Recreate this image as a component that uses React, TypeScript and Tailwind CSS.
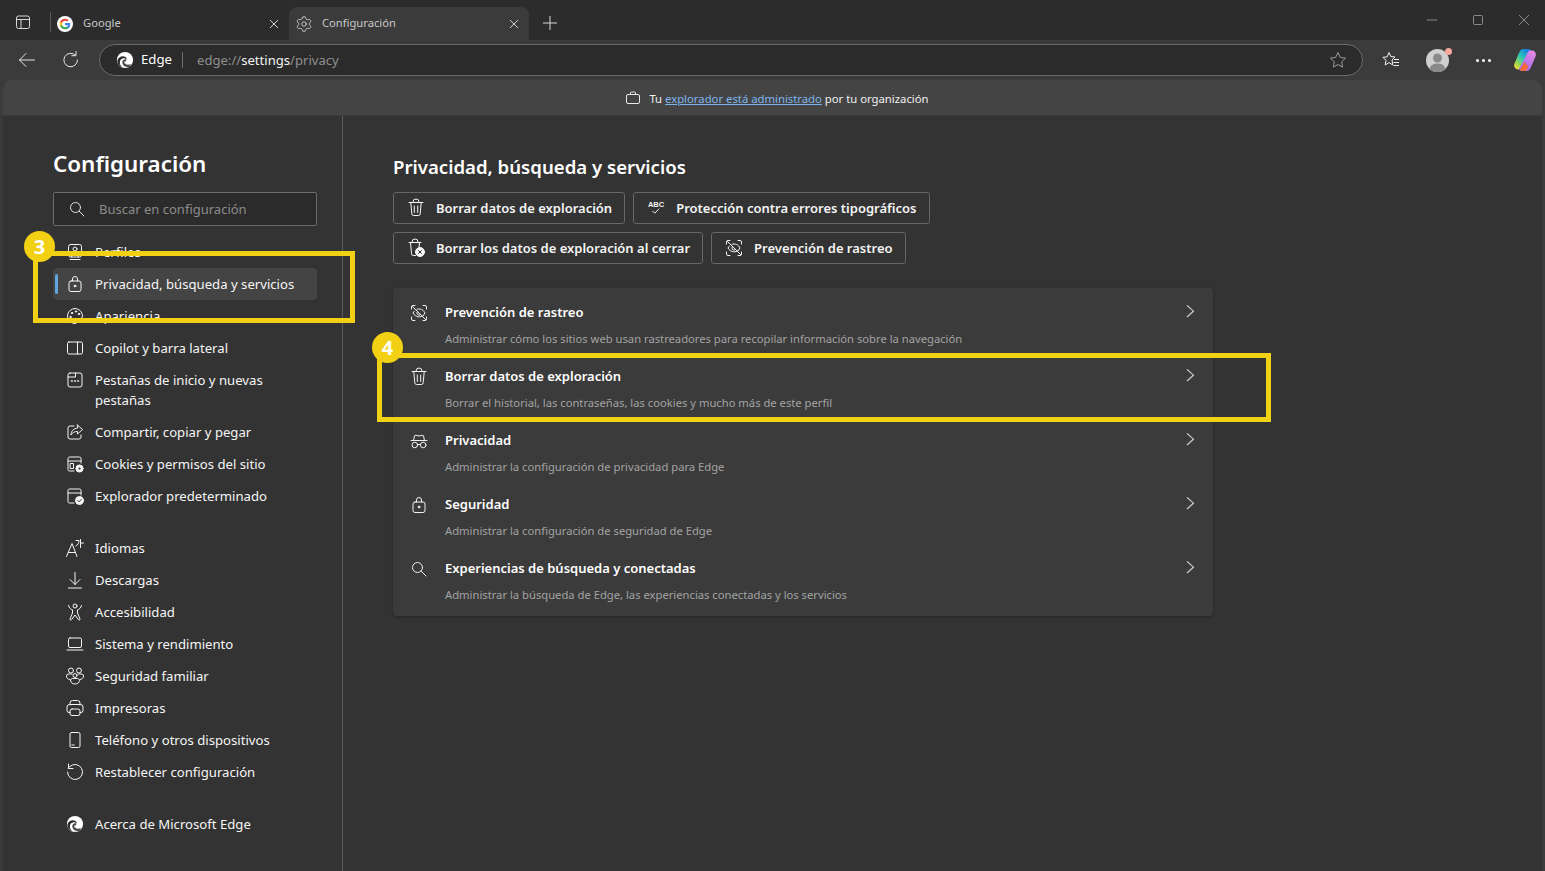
import type { ReactNode } from "react";
import { Settings } from "lucide-react";

function Ico({ size = 20, className = "", children }: { size?: number; className?: string; children: ReactNode }) {
  return (
    <svg
      width={size}
      height={size}
      viewBox="0 0 20 20"
      fill="none"
      stroke="currentColor"
      strokeWidth={1}
      strokeLinecap="round"
      strokeLinejoin="round"
      className={`shrink-0 ${className}`}
    >
      {children}
    </svg>
  );
}

const TrashIcon = () => (
  <Ico>
    <path d="M3 4.500h14M7 4.500V4a3 3 0 0 1 6 0v.5M4.800 4.500l1 11.200A1.800 1.800 0 0 0 7.600 17.500h4.800a1.800 1.800 0 0 0 1.800-1.800l1-11.200M8.300 8v6.500M11.700 8v6.500" />
  </Ico>
);
const TrashCloseIcon = () => (
  <Ico>
    <path d="M3 4.500h12M6 4.500V4a3 3 0 0 1 6 0v.5M4.500 4.500l1 11.200A1.800 1.800 0 0 0 7.300 17.500H9.500M13.500 4.500l-.4 4.500" />
    <circle cx="14" cy="14" r="4.500" fill="currentColor" />
    <path d="M12.500 12.500l3 3M15.500 12.500l-3 3" stroke="#333333" />
  </Ico>
);
const TrackIcon = () => (
  <Ico>
    <path d="M2.500 6V4A1.500 1.500 0 0 1 4 2.500h2M14 2.500h2A1.500 1.500 0 0 1 17.500 4v2M2.500 14v2A1.500 1.500 0 0 0 4 17.500h2M14 17.500h2a1.500 1.500 0 0 0 1.500-1.500v-2" />
    <path d="M5.500 8c-.6.600-1.100 1.300-1.500 2 2.500 4.500 8 5 11 2M8 6.200c3-.8 6.300.2 8 3.800-.3.600-.7 1.100-1 1.500M3.500 3.500l13 13" />
    <path d="M8.500 8.500a2.100 2.100 0 0 0 3 3" />
  </Ico>
);
const AbcIcon = () => (
  <svg width="20" height="20" viewBox="0 0 20 20" className="shrink-0">
    <text x="10" y="8.500" textAnchor="middle" fontSize="7.500" fontFamily="'Liberation Sans',sans-serif" fill="currentColor">
      ABC
    </text>
    <path d="M6.500 13l2.200 2.200 4.500-4.500" fill="none" stroke="currentColor" strokeWidth={1} />
  </svg>
);
const LockIcon = () => (
  <Ico>
    <rect x="4" y="7" width="12" height="10.500" rx="2" />
    <path d="M7.500 7V5a2.500 2.500 0 0 1 5 0v2" />
    <circle cx="10" cy="12" r=".9" fill="currentColor" />
  </Ico>
);
const SpyIcon = () => (
  <Ico>
    <path d="M2 9.500h16M4.500 9.500l1-4.500a1 1 0 0 1 1.300-.7L10 5l3.200-.7a1 1 0 0 1 1.300.7l1 4.500" />
    <circle cx="5.800" cy="14" r="2.800" />
    <circle cx="14.200" cy="14" r="2.800" />
    <path d="M8.600 13.500h2.800" />
  </Ico>
);
const SearchIcon = () => (
  <Ico>
    <circle cx="8.500" cy="8.500" r="5" />
    <path d="M12.200 12.200l4.800 4.800" />
  </Ico>
);
const ProfileIcon = () => (
  <Ico>
    <rect x="3.500" y="2.500" width="13" height="12.500" rx="2" />
    <circle cx="10" cy="7" r="2" />
    <path d="M6.500 15c0-5 7-5 7 0M5 17.500h10" />
  </Ico>
);
const PaletteIcon = () => (
  <Ico>
    <path d="M10 2.500a7.500 7.500 0 0 0 0 15c2 0 2-1.500 1.300-2.500-.8-1.300.2-2.500 1.700-2.500h2c1.500 0 2.500-1 2.500-2.500 0-4-3.500-7.500-7.500-7.500z" />
    <circle cx="7" cy="7" r=".7" fill="currentColor" />
    <circle cx="11" cy="5.500" r=".7" fill="currentColor" />
    <circle cx="14" cy="8" r=".7" fill="currentColor" />
    <circle cx="5.500" cy="11" r=".7" fill="currentColor" />
  </Ico>
);
const SidebarIcon = () => (
  <Ico>
    <rect x="2.500" y="4" width="15" height="12" rx="1.500" />
    <path d="M12.500 4v12" />
  </Ico>
);
const NewTabIcon = () => (
  <Ico>
    <rect x="3" y="3" width="14" height="14" rx="2" />
    <path d="M3 7h7.500V3" />
    <path d="M6.500 11h.8M9.600 11h.8M12.700 11h.8" strokeWidth={1.400} />
  </Ico>
);
const ShareIcon = () => (
  <Ico>
    <path d="M9 4H5a2 2 0 0 0-2 2v9a2 2 0 0 0 2 2h9a2 2 0 0 0 2-2v-2" />
    <path d="M12.500 3l5 4.500-5 4.500V9.500c-3 0-5 1-6.500 3.500 0-4 2.500-6.500 6.500-7z" />
  </Ico>
);
const CookieIcon = () => (
  <Ico>
    <path d="M9 17H4.500A1.500 1.500 0 0 1 3 15.500v-11A1.500 1.500 0 0 1 4.500 3h10A1.500 1.500 0 0 1 16 4.500V9M3 7h13" />
    <rect x="5.500" y="9.500" width="3" height="5" />
    <circle cx="14.500" cy="14.500" r="3.600" fill="currentColor" />
    <circle cx="14.500" cy="14.500" r="1.100" fill="#333333" stroke="none" />
  </Ico>
);
const DefaultBrowserIcon = () => (
  <Ico>
    <path d="M9 17H4.500A1.500 1.500 0 0 1 3 15.500v-11A1.500 1.500 0 0 1 4.500 3h10A1.500 1.500 0 0 1 16 4.500V9M3 7h13" />
    <circle cx="14.500" cy="14.500" r="4" fill="currentColor" />
    <path d="M12.800 14.600l1.200 1.200 2.200-2.300" stroke="#333333" />
  </Ico>
);
const LangIcon = () => (
  <Ico>
    <path d="M1.500 18.500L7 5.500l5 13M3.500 14.500h7M11 2.500h3c0 2.500-1 4.500-3 5.500M15.500 1.500v8M15.500 5h3" />
  </Ico>
);
const DownloadIcon = () => (
  <Ico>
    <path d="M10 2.500v12M5 9.500l5 5 5-5M3.500 18h13" />
  </Ico>
);
const AccessIcon = () => (
  <Ico>
    <circle cx="10" cy="4" r="2" />
    <path d="M3.500 3.500c.5 2.500 2.500 4 4 4.300V11l-2.500 6c-.3 1 1 1.500 1.500.7L10 13l3.500 4.700c.5.800 1.800.3 1.500-.7l-2.500-6V7.800c1.500-.3 3.500-1.800 4-4.300" />
  </Ico>
);
const LaptopIcon = () => (
  <Ico>
    <rect x="3.500" y="4" width="13" height="9.500" rx="1.500" />
    <path d="M2 16h16" />
  </Ico>
);
const FamilyIcon = () => (
  <Ico>
    <circle cx="6" cy="4.500" r="2.500" />
    <circle cx="14" cy="4.500" r="2.500" />
    <circle cx="10" cy="9.500" r="2" />
    <path d="M7 8H3.500A2 2 0 0 0 1.500 10C1.500 12 3 13.500 5 13.500M13 8h3.500a2 2 0 0 1 2 2c0 2-1.500 3.500-3.500 3.500M5.500 14.500c0-1 1-2 2-2h5c1 0 2 1 2 2 0 2-2 3.500-4.500 3.500s-4.500-1.500-4.500-3.500z" />
  </Ico>
);
const PrinterIcon = () => (
  <Ico>
    <path d="M5 7V5a2.500 2.500 0 0 1 2.500-2.500h5A2.500 2.500 0 0 1 15 5v2M5 14.500H4A2 2 0 0 1 2 12.500V9a2.500 2.500 0 0 1 2.500-2.500h11A2.500 2.500 0 0 1 18 9v3.500a2 2 0 0 1-2 2h-1" />
    <rect x="5" y="11" width="10" height="6.500" rx="2" />
  </Ico>
);
const PhoneIcon = () => (
  <Ico>
    <rect x="5" y="2.500" width="10" height="15" rx="1.500" />
    <path d="M6.800 15h2.400" />
  </Ico>
);
const ResetIcon = () => (
  <Ico>
    <path d="M2.500 10a7.500 7.500 0 1 0 2.300-5.400L3 6.300M3.500 2v4.500H8" />
  </Ico>
);

function EdgeLogo({ size = 18 }: { size?: number }) {
  return (
    <svg width={size} height={size} viewBox="0 0 20 20" className="shrink-0">
      <circle cx="10" cy="10" r="9" fill="#ffffff" />
      <path d="M1.500 11C2.500 6.500 7 5 10 6.500c1.500.8 2 2 1.700 3-2-2.200-6-2-7.200 1.500-.7 2 0 5 2.500 7C3.500 17 1.500 14 1.500 11z" fill="#2b2b2b" />
      <path d="M11.500 9.500c.3 1.500-1 2.500-2.500 2.500.3 2.800 4 4 7.500 2.500l-.9 2.700c-3.600 1.600-8.100-.2-8.600-4.200-.3-2.500 2-4.500 4.500-3.500z" fill="#2b2b2b" opacity=".85" />
    </svg>
  );
}

function GoogleLogo() {
  return (
    <svg width="16" height="16" viewBox="0 0 48 48" className="shrink-0">
      <circle cx="24" cy="24" r="24" fill="#ffffff" />
      <path d="M39.600 24.500c0-1.200-.1-2.300-.3-3.400H24v6.500h8.800c-.4 2-1.500 3.700-3.200 4.900v4h5.100c3-2.800 4.900-6.900 4.900-12z" fill="#4285f4" />
      <path d="M24 40c4.300 0 7.900-1.400 10.600-3.900l-5.100-4c-1.400 1-3.300 1.500-5.400 1.500-4.200 0-7.700-2.800-9-6.600H9.800v4.100C12.400 36.400 17.800 40 24 40z" fill="#34a853" />
      <path d="M15 27c-.3-1-.5-2-.5-3s.2-2.100.5-3v-4.100H9.800C8.700 19 8 21.400 8 24s.7 5 1.800 7.100z" fill="#fbbc05" />
      <path d="M24 14.400c2.400 0 4.500.8 6.100 2.400l4.600-4.600C31.900 9.600 28.300 8 24 8c-6.200 0-11.600 3.600-14.200 8.900L15 21c1.300-3.800 4.800-6.600 9-6.600z" fill="#ea4335" />
    </svg>
  );
}

function CopilotLogo() {
  return (
    <svg width="24" height="24" viewBox="0 0 24 24" className="shrink-0">
      <defs>
        <linearGradient id="cpl" x1="0.800" y1="0" x2="0.150" y2="1">
          <stop offset="0" stopColor="#1578e6" />
          <stop offset="0.450" stopColor="#2cc8b0" />
          <stop offset="0.800" stopColor="#a6d94a" />
          <stop offset="1" stopColor="#f6d743" />
        </linearGradient>
        <linearGradient id="cpr" x1="0.800" y1="0" x2="0.200" y2="1">
          <stop offset="0" stopColor="#e58be0" />
          <stop offset="1" stopColor="#9a63ee" />
        </linearGradient>
      </defs>
      <path d="M10 1h6c1 0 1.500.8 2 2L9 20c-.5 1-1 1.500-2 1.500H5C2 21.500.5 18.500 1.300 16L6 5c.8-2.300 2-4 4-4z" fill="url(#cpl)" />
      <path d="M14 23H8c-1 0-1.500-.8-2-2l9-17c.5-1 1-1.500 2-1.500h2c3 0 4.500 3 3.700 5.500L18 19c-.8 2.300-2 4-4 4z" fill="url(#cpr)" />
      <path d="M7 21.500c.5 1 1 1.500 2 1.500h4l2.500-4.500-4-4.500z" fill="#f26a3d" />
    </svg>
  );
}

function WinTab({ active, icon, title, className = "" }: { active?: boolean; icon: ReactNode; title: string; className?: string }) {
  return (
    <div className={`flex h-[33px] items-center rounded-t-lg ${active ? "bg-[#3b3b3b]" : ""} ${className}`}>
      <span className="flex w-[16px] justify-center">{icon}</span>
      <span className="ml-[10px] flex-1 text-[11.2px] text-[#c8c8c8]">{title}</span>
      <svg width="12" height="12" viewBox="0 0 12 12" className="text-[#cfcfcf]">
        <path d="M2 2l8 8M10 2l-8 8" stroke="currentColor" strokeWidth="1" />
      </svg>
    </div>
  );
}

function TitleBar() {
  return (
    <div className="flex h-[40px] items-end bg-[#2c2c2c] pl-[13px]">
      <div className="mb-[8px] flex items-center">
        <svg width="20" height="20" viewBox="0 0 20 20" fill="none" stroke="#d8d8d8">
          <rect x="3.500" y="4" width="13" height="12.500" rx="2" />
          <path d="M3.500 7.500h13M8 7.500v9" />
        </svg>
        <div className="ml-[17px] h-[20px] w-px bg-[#5a5a5a]" />
      </div>
      <WinTab icon={<GoogleLogo />} title="Google" className="ml-[6px] w-[232px] pr-[9px]" />
      <WinTab
        active
        title="Configuración"
        className="w-[240px] pl-[7px] pr-[9px]"
        icon={<Settings size={18} strokeWidth={1.1} color="#dcdcdc" className="shrink-0" />}
      />
      <svg width="18" height="18" viewBox="0 0 18 18" className="mb-[8px] ml-[12px]" stroke="#d8d8d8">
        <path d="M9 2v14M2 9h14" />
      </svg>
      <div className="mb-[15px] ml-auto mr-[16px] flex items-center gap-[36px] text-[#8a8a8a]">
        <svg width="10" height="10" viewBox="0 0 10 10" stroke="currentColor"><path d="M0 5h10" /></svg>
        <svg width="10" height="10" viewBox="0 0 10 10" fill="none" stroke="currentColor"><rect x=".5" y=".5" width="9" height="9" rx="1" /></svg>
        <svg width="10" height="10" viewBox="0 0 10 10" stroke="currentColor"><path d="M0 0l10 10M10 0L0 10" /></svg>
      </div>
    </div>
  );
}

function ToolBar() {
  return (
    <div className="flex h-[40px] items-center bg-[#3b3b3b] pl-[17px] pr-[8px]">
      <svg width="20" height="20" viewBox="0 0 20 20" fill="none" stroke="#e6e6e6" strokeLinecap="round" strokeLinejoin="round">
        <path d="M2.500 10h15M9 3.500L2.500 10 9 16.500" />
      </svg>
      <svg width="20" height="20" viewBox="0 0 20 20" fill="none" stroke="#e6e6e6" className="ml-[24px]" strokeLinecap="round" strokeLinejoin="round">
        <path d="M16.500 10a6.800 6.800 0 1 1-2-4.800M15 1.500v4.200h-4.200" />
      </svg>
      <div className="ml-[18px] flex h-[32px] flex-1 items-center rounded-full border border-[#6a6a6a] bg-[#2b2b2b] pl-[16px] pr-[14px]">
        <EdgeLogo />
        <span className="ml-[7px] text-[13.2px] text-white">Edge</span>
        <div className="ml-[10px] h-[16px] w-px bg-[#6f6f6f]" />
        <span className="ml-[14px] mt-[1px] text-[13.1px] text-[#8f8f8f]">
          edge://<span className="text-[#f2f2f2]">settings</span>/privacy
        </span>
        <svg width="20" height="20" viewBox="0 0 20 20" fill="none" stroke="#9a9a9a" className="ml-auto" strokeLinejoin="round">
          <path d="M10 2.500l2.300 4.900 5.200.7-3.800 3.700.9 5.300-4.600-2.600-4.600 2.600.9-5.300L2.500 8.100l5.200-.7z" />
        </svg>
      </div>
      <svg width="20" height="20" viewBox="0 0 20 20" fill="none" stroke="#f0f0f0" className="ml-[18px]" strokeLinejoin="round">
        <path d="M8 2.500l1.800 4 4.200.5-3 3 .8 5-3.800-2.400L4.200 15l.8-4.700-3-3 4.200-.5zM13 9.500h5M12.500 12.500h5.500M12.500 15.500h5.500" />
      </svg>
      <div className="relative ml-[25px] h-[23px] w-[23px] shrink-0 overflow-visible">
        <svg width="23" height="23" viewBox="0 0 23 23">
          <circle cx="11.500" cy="11.500" r="11.500" fill="#cfcfcf" />
          <circle cx="11.500" cy="9" r="4.500" fill="#8a8a8a" />
          <path d="M3.500 20c1-4.500 5-5.500 8-5.500s7 1 8 5.500a11.500 11.500 0 0 1-16 0z" fill="#8a8a8a" />
        </svg>
        <span className="absolute right-[-3px] top-[-1px] h-[7px] w-[7px] rounded-full bg-[#f8a8a0]" />
      </div>
      <div className="ml-[27px] flex items-center gap-[3px]">
        <span className="h-[3px] w-[3px] rounded-full bg-white" />
        <span className="h-[3px] w-[3px] rounded-full bg-white" />
        <span className="h-[3px] w-[3px] rounded-full bg-white" />
      </div>
      <div className="ml-[22px]">
        <CopilotLogo />
      </div>
    </div>
  );
}

function ManagedBar() {
  return (
    <div className="flex h-[36px] items-center justify-center rounded-t-lg border-b border-[#3c3c3c] bg-[#444444] pl-[9px] pt-[3px] text-[11.300px] text-[#f0f0f0]">
      <svg width="16" height="16" viewBox="0 0 16 16" fill="none" stroke="#e8e8e8" className="mr-[8px] -translate-y-[1px]" strokeLinejoin="round">
        <rect x="1.500" y="4.500" width="13" height="9" rx="1.500" />
        <path d="M5.500 4.500V3a1 1 0 0 1 1-1h3a1 1 0 0 1 1 1v1.500" />
      </svg>
      <span>
        Tu <span className="text-[#7db4ee] underline">explorador está administrado</span> por tu organización
      </span>
    </div>
  );
}

function NavItem({ icon, label, active, className = "" }: { icon: ReactNode; label: string; active?: boolean; className?: string }) {
  return (
    <div
      className={`relative flex min-h-[32px] items-start rounded-[4px] py-[6px] pl-[12px] pr-[16px] text-[13.150px] leading-[20px] text-[#f5f5f5] ${
        active ? "bg-[#444444]" : ""
      } ${className}`}
    >
      {active && <span className="absolute left-[2px] top-[6px] h-[20px] w-[3px] rounded-full bg-[#60a5e0]" />}
      <span className="flex h-[20px] w-[20px] items-center justify-center">{icon}</span>
      <span className="ml-[10px]">{label}</span>
    </div>
  );
}

function Sidebar() {
  return (
    <aside className="w-[340px] shrink-0 border-r border-[#5a5a5a] pl-[50px] pr-[25px] pt-[33px]">
      <h1 className="text-[22.400px] font-semibold leading-[30px] text-white">Configuración</h1>
      <div className="mt-[13px] flex h-[34px] items-center rounded-[2px] border border-[#6b6b6b] bg-[#2b2b2b] pl-[13px] text-[13px] text-[#8c8c8c]">
        <span className="text-[#e0e0e0]">
          <SearchIcon />
        </span>
        <span className="ml-[12px] mt-[1px]">Buscar en configuración</span>
      </div>
      <nav className="mt-[10px]">
        <NavItem icon={<ProfileIcon />} label="Perfiles" />
        <NavItem icon={<LockIcon />} label="Privacidad, búsqueda y servicios" active />
        <NavItem icon={<PaletteIcon />} label="Apariencia" />
        <NavItem icon={<SidebarIcon />} label="Copilot y barra lateral" />
        <NavItem icon={<NewTabIcon />} label="Pestañas de inicio y nuevas pestañas" />
        <NavItem icon={<ShareIcon />} label="Compartir, copiar y pegar" />
        <NavItem icon={<CookieIcon />} label="Cookies y permisos del sitio" />
        <NavItem icon={<DefaultBrowserIcon />} label="Explorador predeterminado" />
        <NavItem icon={<LangIcon />} label="Idiomas" className="mt-[20px]" />
        <NavItem icon={<DownloadIcon />} label="Descargas" />
        <NavItem icon={<AccessIcon />} label="Accesibilidad" />
        <NavItem icon={<LaptopIcon />} label="Sistema y rendimiento" />
        <NavItem icon={<FamilyIcon />} label="Seguridad familiar" />
        <NavItem icon={<PrinterIcon />} label="Impresoras" />
        <NavItem icon={<PhoneIcon />} label="Teléfono y otros dispositivos" />
        <NavItem icon={<ResetIcon />} label="Restablecer configuración" />
        <NavItem icon={<EdgeLogo />} label="Acerca de Microsoft Edge" className="mt-[20px]" />
      </nav>
    </aside>
  );
}

function QuickButton({ icon, label }: { icon: ReactNode; label: string }) {
  return (
    <div className="flex h-[32px] items-center rounded-[3px] border border-[#666666] pl-[12px] pr-[12px] text-[13px] font-semibold text-[#f5f5f5]">
      {icon}
      <span className="ml-[10px] mt-[1px]">{label}</span>
    </div>
  );
}

const rows = [
  { icon: <TrackIcon />, title: "Prevención de rastreo", desc: "Administrar cómo los sitios web usan rastreadores para recopilar información sobre la navegación" },
  { icon: <TrashIcon />, title: "Borrar datos de exploración", desc: "Borrar el historial, las contraseñas, las cookies y mucho más de este perfil" },
  { icon: <SpyIcon />, title: "Privacidad", desc: "Administrar la configuración de privacidad para Edge" },
  { icon: <LockIcon />, title: "Seguridad", desc: "Administrar la configuración de seguridad de Edge" },
  { icon: <SearchIcon />, title: "Experiencias de búsqueda y conectadas", desc: "Administrar la búsqueda de Edge, las experiencias conectadas y los servicios" },
];

function Content() {
  return (
    <main className="flex-1 pl-[50px] pt-[37px]">
      <h2 className="text-[18.600px] font-semibold leading-[28px] text-white">Privacidad, búsqueda y servicios</h2>
      <div className="mt-[11px] flex gap-[8px]">
        <QuickButton icon={<TrashIcon />} label="Borrar datos de exploración" />
        <QuickButton icon={<AbcIcon />} label="Protección contra errores tipográficos" />
      </div>
      <div className="mt-[8px] flex gap-[8px]">
        <QuickButton icon={<TrashCloseIcon />} label="Borrar los datos de exploración al cerrar" />
        <QuickButton icon={<TrackIcon />} label="Prevención de rastreo" />
      </div>
      <div className="mt-[24px] w-[820px] rounded-[4px] bg-[#3b3b3b] pb-[8px] shadow-[0_1px_3px_rgba(0,0,0,0.3)]">
        {rows.map((row) => (
          <div key={row.title} className="flex h-[64px] pl-[16px] pr-[15px] pt-[14px]">
            <span className="mt-[1px] text-[#f0f0f0]">{row.icon}</span>
            <div className="ml-[16px] flex-1">
              <div className="text-[13px] font-semibold leading-[20px] text-white">{row.title}</div>
              <div className="mt-[9px] text-[11.220px] leading-[16px] text-[#a3a3a3]">{row.desc}</div>
            </div>
            <svg width="16" height="16" viewBox="0 0 16 16" fill="none" stroke="#d0d0d0" strokeWidth="1.200" className="mt-[2px]">
              <path d="M5 2l6.500 6.500L5 15" transform="translate(0 -.500) scale(1 .9)" />
            </svg>
          </div>
        ))}
      </div>
    </main>
  );
}

function Callout({ n, box, badge }: { n: number; box: string; badge: string }) {
  return (
    <>
      <div className={`pointer-events-none absolute border-[5px] border-[#f2d013] ${box}`} />
      <div
        className={`absolute flex h-[31px] w-[31px] items-center justify-center rounded-full bg-[#f2d013] text-[20px] font-bold text-white ${badge}`}
      >
        {n}
      </div>
    </>
  );
}

export default function App() {
  return (
    <div className="relative h-[871px] overflow-hidden bg-[#3b3b3b] font-['Noto_Sans',sans-serif]">
      <TitleBar />
      <ToolBar />
      <div className="mx-[3px] h-[791px] overflow-hidden rounded-t-lg bg-[#333333]">
        <ManagedBar />
        <div className="flex h-[755px]">
          <Sidebar />
          <Content />
        </div>
      </div>
      <Callout n={3} box="left-[33px] top-[251px] h-[72px] w-[322px]" badge="left-[24px] top-[231px]" />
      <Callout n={4} box="left-[377px] top-[353px] h-[69px] w-[894px]" badge="left-[372px] top-[332px]" />
    </div>
  );
}
